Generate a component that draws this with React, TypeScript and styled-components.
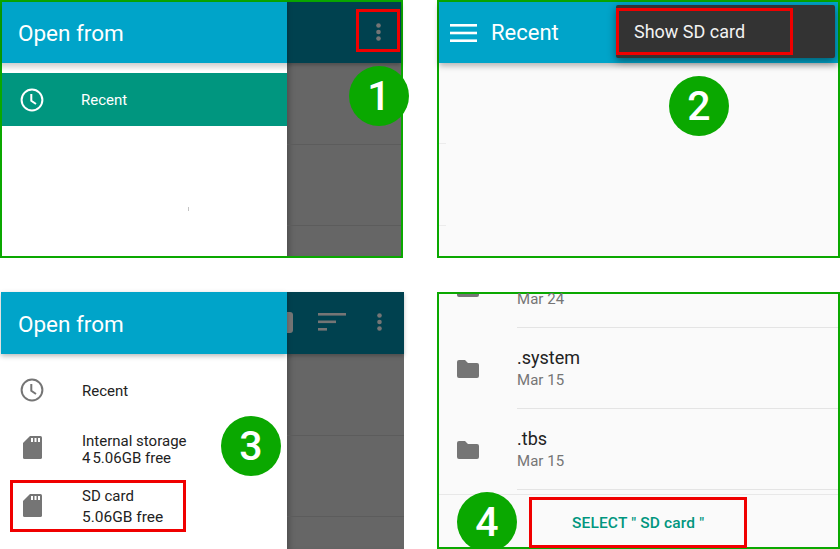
import styled, { createGlobalStyle } from "styled-components";

const Green = "#0aa800";
const Cyan = "#00a4c9";
const Teal = "#00967f";
const DimCyan = "#00414f";
const Scrim = "#666666";
const IconGrey = "#757575";

const GlobalStyle = createGlobalStyle`
  html, body {
    margin: 0;
    padding: 0;
    background: #fff;
    font-family: Roboto, "Liberation Sans", sans-serif;
  }
`;

const Page = styled.div`
  width: 840px;
  height: 549px;
  display: grid;
  grid-template-columns: 404px 403px;
  grid-template-rows: 258px 257px;
  column-gap: 33px;
  row-gap: 34px;
  overflow: hidden;
`;

const Panel = styled.div<{ $plain?: boolean }>`
  position: relative;
  box-sizing: border-box;
  width: ${({ $plain }) => ($plain ? "404px" : "403px")};
  height: 100%;
  display: flex;
  padding: ${({ $plain }) => ($plain ? "0 0 0 1px" : "2px")};
  box-shadow: ${({ $plain }) => ($plain ? "none" : `inset 0 0 0 2px ${Green}`)};
`;

const Screen = styled.div`
  flex: 1;
  min-width: 0;
  display: flex;
  flex-direction: column;
  background: #fafafa;
`;

const Drawer = styled.div<{ $wide?: boolean }>`
  position: relative;
  z-index: 1;
  width: ${({ $wide }) => ($wide ? "286px" : "285px")};
  flex: none;
  display: flex;
  flex-direction: column;
  background: #fff;
`;

const DrawerHeader = styled.div<{ $tall?: boolean }>`
  height: ${({ $tall }) => ($tall ? "62px" : "61px")};
  flex: none;
  box-sizing: border-box;
  display: flex;
  align-items: center;
  padding: ${({ $tall }) => ($tall ? "2px 0 0 17px" : "0 0 0 16px")};
  background: ${Cyan};
  color: #fff;
  font-size: 22.5px;
  box-shadow: 0 2px 5px rgba(0, 0, 0, 0.28);
`;

const Shade = styled.div`
  height: 10px;
  flex: none;
  background: linear-gradient(#cfcfcf, #fff 80%);
`;

const NavRow = styled.div<{ $active?: boolean; $height: number; $inset?: number }>`
  height: ${({ $height }) => $height}px;
  flex: none;
  display: flex;
  align-items: center;
  padding-left: ${({ $inset }) => $inset ?? 18}px;
  background: ${({ $active }) => ($active ? Teal : "transparent")};
  color: ${({ $active }) => ($active ? "#fff" : "#222")};
`;

const NavIcon = styled.div<{ $gap?: number; $lift?: number }>`
  width: 24px;
  height: 24px;
  flex: none;
  margin-right: ${({ $gap }) => $gap ?? 37}px;
  margin-top: ${({ $lift }) => -($lift ?? 0)}px;
  display: flex;
  align-items: center;
  justify-content: center;
`;

const NavText = styled.div<{ $gap?: number; $drop?: boolean }>`
  display: flex;
  flex-direction: column;
  gap: ${({ $gap }) => $gap ?? 0}px;
  padding-top: ${({ $drop }) => ($drop ? "2px" : "0")};
  font-size: 15px;
  line-height: 17px;
`;

const NavLine = styled.span<{ $size?: number }>`
  font-size: ${({ $size }) => $size ?? 15}px;
`;

const SpacedDigit = styled.span`
  margin-right: 2px;
`;

const Backdrop = styled.div`
  flex: 1;
  display: flex;
  flex-direction: column;
  background: ${Scrim};
  box-shadow: inset 6px 0 6px -4px rgba(0, 0, 0, 0.25);
`;

const BackdropHeader = styled.div<{ $tall?: boolean }>`
  height: ${({ $tall }) => ($tall ? "62px" : "61px")};
  flex: none;
  display: flex;
  align-items: center;
  background: ${DimCyan};
  box-shadow: 0 2px 4px rgba(0, 0, 0, 0.25);
`;

const BackdropRow = styled.div<{ $height: number }>`
  height: ${({ $height }) => $height}px;
  flex: none;
  box-sizing: border-box;
  border-bottom: 1px solid #5c5c5c;
`;

const MenuDots = styled.svg<{ $right: number }>`
  margin: -2px ${({ $right }) => $right}px 0 auto;
  flex: none;
`;

const SearchStub = styled.div`
  width: 6px;
  height: 21px;
  flex: none;
  background: ${IconGrey};
  border-radius: 0 3px 3px 0;
  margin-top: -2px;
`;

const SortIcon = styled.svg`
  margin: -2px 0 0 25px;
  flex: none;
`;

const AppBar = styled.div`
  height: 61px;
  flex: none;
  display: flex;
  align-items: center;
  padding-left: 11px;
  background: ${Cyan};
  color: #fff;
  font-size: 22px;
  box-shadow: 0 3px 6px rgba(0, 0, 0, 0.28);
`;

const BarTitle = styled.span`
  margin-left: 14px;
`;

const OverflowMenu = styled.div`
  position: absolute;
  top: 5px;
  right: 5px;
  width: 219px;
  height: 53px;
  display: flex;
  align-items: center;
  padding-left: 18px;
  box-sizing: border-box;
  background: #333;
  color: #f2f2f2;
  font-size: 18px;
  border-radius: 2px;
  box-shadow: 0 3px 8px rgba(0, 0, 0, 0.45);
`;

const Stub = styled.div<{ $top: number }>`
  position: absolute;
  left: 2px;
  top: ${({ $top }) => $top}px;
  width: 7px;
  height: 1px;
  background: #ececec;
`;

const Speck = styled.div`
  position: absolute;
  left: 186px;
  top: 205px;
  width: 1px;
  height: 4px;
  background: #c4c4c4;
`;

const FileList = styled.div`
  flex: 1;
  min-height: 0;
  display: flex;
  flex-direction: column;
`;

const FileRow = styled.div<{ $short?: boolean }>`
  height: ${({ $short }) => ($short ? "34px" : "81px")};
  flex: none;
  display: flex;
  align-items: center;
`;

const FileIcon = styled.div<{ $clipped?: boolean }>`
  width: 78px;
  height: ${({ $clipped }) => ($clipped ? "3px" : "auto")};
  flex: none;
  align-self: ${({ $clipped }) => ($clipped ? "flex-start" : "auto")};
  box-sizing: border-box;
  padding-right: 20px;
  display: flex;
  justify-content: center;
  align-items: flex-end;
  overflow: hidden;
`;

const FolderGlyph = styled.svg`
  flex: none;
`;

const FileBody = styled.div<{ $clipped?: boolean }>`
  flex: 1;
  align-self: stretch;
  box-sizing: border-box;
  border-bottom: 1px solid #e4e4e4;
  display: flex;
  flex-direction: column;
  justify-content: ${({ $clipped }) => ($clipped ? "flex-end" : "center")};
  padding: ${({ $clipped }) => ($clipped ? "0 0 22px" : "2px 0 0")};
`;

const FileName = styled.div`
  font-size: 18px;
  line-height: 22px;
  color: #222;
`;

const FileDate = styled.div<{ $tight?: boolean }>`
  font-size: 15px;
  line-height: ${({ $tight }) => ($tight ? "12px" : "22px")};
  letter-spacing: 0.05px;
  color: #757575;
`;

const Footer = styled.div`
  height: 53px;
  flex: none;
  display: flex;
  align-items: center;
  box-sizing: border-box;
  padding: 3px 0 0 133px;
  border-top: 1px solid #e8e8e8;
  margin-top: 4px;
  color: ${Teal};
  font-size: 15.5px;
  font-weight: 500;
  letter-spacing: 0.15px;
  white-space: pre;
`;

const Highlight = styled.div<{ $x: number; $y: number; $w: number; $h: number }>`
  position: absolute;
  z-index: 2;
  left: ${({ $x }) => $x}px;
  top: ${({ $y }) => $y}px;
  width: ${({ $w }) => $w}px;
  height: ${({ $h }) => $h}px;
  box-sizing: border-box;
  border: 3px solid #f00000;
`;

const Badge = styled.div<{ $cx: number; $cy: number }>`
  position: absolute;
  z-index: 3;
  left: ${({ $cx }) => $cx - 30}px;
  top: ${({ $cy }) => $cy - 30}px;
  width: 60px;
  height: 60px;
  border-radius: 50%;
  background: ${Green};
  color: #fff;
  display: flex;
  align-items: center;
  justify-content: center;
  font-size: 41px;
  font-weight: 500;
`;

function ClockIcon({ color }: { color: string }) {
  return (
    <svg width="24" height="24" viewBox="0 0 24 24" fill="none" stroke={color} strokeWidth="2">
      <circle cx="12" cy="12" r="10.4" />
      <path d="M11.3 6v6.8l4.7 3.2" />
    </svg>
  );
}

function SdIcon() {
  return (
    <svg width="19" height="23" viewBox="0 0 19 23">
      <path
        fill={IconGrey}
        d="M7 0h10.4A1.6 1.6 0 0 1 19 1.6v19.8a1.6 1.6 0 0 1-1.6 1.6H1.6A1.6 1.6 0 0 1 0 21.4V7z"
      />
      <path fill="#fff" d="M8 2h2v4H8zM11.5 2h2v4h-2zM15 2h2v4h-2z" />
    </svg>
  );
}

function FolderIcon() {
  return (
    <FolderGlyph width="22" height="18" viewBox="0 0 22 18">
      <path
        fill={IconGrey}
        d="M2 0h6l3 3h9a2 2 0 0 1 2 2v11a2 2 0 0 1-2 2H2a2 2 0 0 1-2-2V2a2 2 0 0 1 2-2z"
      />
    </FolderGlyph>
  );
}

function Dots({ right }: { right: number }) {
  return (
    <MenuDots $right={right} width="5" height="18" viewBox="0 0 5 18" fill={IconGrey}>
      <circle cx="2.5" cy="2.5" r="2.3" />
      <circle cx="2.5" cy="9" r="2.3" />
      <circle cx="2.5" cy="15.5" r="2.3" />
    </MenuDots>
  );
}

function MenuIcon() {
  return (
    <svg width="27" height="18" viewBox="0 0 27 18" fill="#fff">
      <rect y="0" width="27" height="2.6" />
      <rect y="7.7" width="27" height="2.6" />
      <rect y="15.4" width="27" height="2.6" />
    </svg>
  );
}

function App() {
  return (
    <>
      <GlobalStyle />
      <Page>
        <Panel>
          <Drawer>
            <DrawerHeader>Open from</DrawerHeader>
            <Shade />
            <NavRow $active $height={53}>
              <NavIcon>
                <ClockIcon color="#fff" />
              </NavIcon>
              <NavText $drop>Recent</NavText>
            </NavRow>
            <Speck />
          </Drawer>
          <Backdrop>
            <BackdropHeader>
              <Dots right={20} />
            </BackdropHeader>
            <BackdropRow $height={82} />
            <BackdropRow $height={81} />
          </Backdrop>
          <Highlight $x={356} $y={9} $w={44} $h={43} />
          <Badge $cx={379} $cy={96}>1</Badge>
        </Panel>

        <Panel>
          <Screen>
            <AppBar>
              <MenuIcon />
              <BarTitle>Recent</BarTitle>
            </AppBar>
          </Screen>
          <Stub $top={143} />
          <Stub $top={225} />
          <OverflowMenu>Show SD card</OverflowMenu>
          <Highlight $x={179} $y={8} $w={177} $h={47} />
          <Badge $cx={262} $cy={106}>2</Badge>
        </Panel>

        <Panel $plain>
          <Drawer $wide>
            <DrawerHeader $tall>Open from</DrawerHeader>
            <NavRow $height={72} $inset={19}>
              <NavIcon $gap={38}>
                <ClockIcon color={IconGrey} />
              </NavIcon>
              <NavText $drop>Recent</NavText>
            </NavRow>
            <NavRow $height={47} $inset={19}>
              <NavIcon $gap={38} $lift={5}>
                <SdIcon />
              </NavIcon>
              <NavText>
                <NavLine>Internal storage</NavLine>
                <NavLine>
                  <SpacedDigit>4</SpacedDigit>5.06GB free
                </NavLine>
              </NavText>
            </NavRow>
            <NavRow $height={67} $inset={19}>
              <NavIcon $gap={38} $lift={3}>
                <SdIcon />
              </NavIcon>
              <NavText $gap={4}>
                <NavLine>SD card</NavLine>
                <NavLine $size={15.5}>5.06GB free</NavLine>
              </NavText>
            </NavRow>
          </Drawer>
          <Backdrop>
            <BackdropHeader $tall>
              <SearchStub />
              <SortIcon width="28" height="18" viewBox="0 0 28 18" fill={IconGrey}>
                <rect y="0" width="28" height="2.6" />
                <rect y="7.5" width="18" height="2.6" />
                <rect y="15" width="9" height="2.6" />
              </SortIcon>
              <Dots right={22} />
            </BackdropHeader>
            <BackdropRow $height={82} />
            <BackdropRow $height={81} />
          </Backdrop>
          <Highlight $x={10} $y={188} $w={176} $h={52} />
          <Badge $cx={251} $cy={154}>3</Badge>
        </Panel>

        <Panel>
          <Screen>
            <FileList>
              <FileRow $short>
                <FileIcon $clipped>
                  <FolderIcon />
                </FileIcon>
                <FileBody $clipped>
                  <FileDate $tight>Mar 24</FileDate>
                </FileBody>
              </FileRow>
              <FileRow>
                <FileIcon>
                  <FolderIcon />
                </FileIcon>
                <FileBody>
                  <FileName>.system</FileName>
                  <FileDate>Mar 15</FileDate>
                </FileBody>
              </FileRow>
              <FileRow>
                <FileIcon>
                  <FolderIcon />
                </FileIcon>
                <FileBody>
                  <FileName>.tbs</FileName>
                  <FileDate>Mar 15</FileDate>
                </FileBody>
              </FileRow>
            </FileList>
            <Footer>SELECT " SD card "</Footer>
          </Screen>
          <Highlight $x={92} $y={205} $w={218} $h={51} />
          <Badge $cx={50} $cy={230}>4</Badge>
        </Panel>
      </Page>
    </>
  );
}

export default App;
